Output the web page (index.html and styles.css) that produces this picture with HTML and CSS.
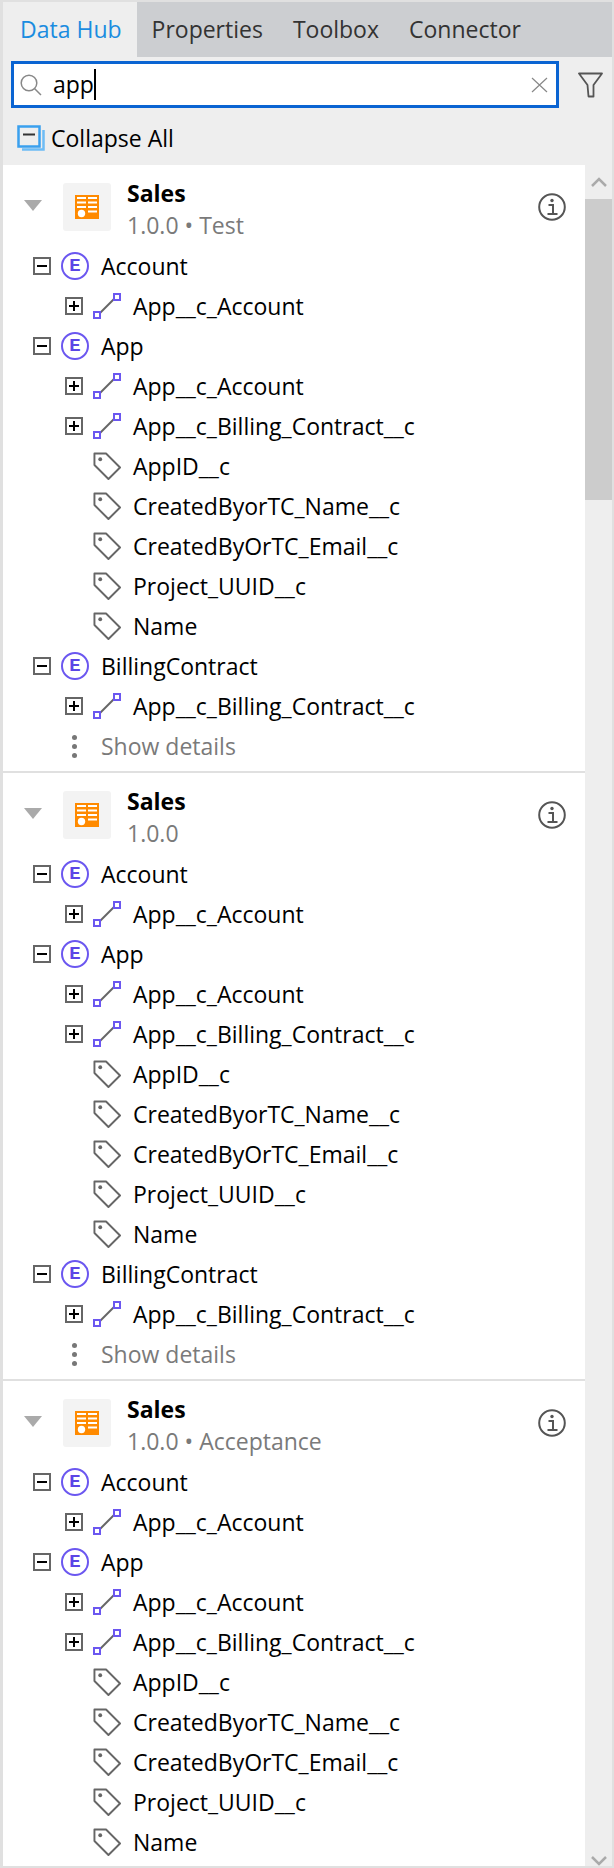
FILE: index.html
```html
<!DOCTYPE html>
<html lang="en-US">
<head>
	<meta charset="UTF-8">
	<title>Data Hub</title>
	<link rel="stylesheet" href="styles.css">
</head>
<body>
	<svg class="defs" width="0" height="0">
		<symbol id="i-assoc" viewBox="0 0 28 28">
			<path d="M6 22 22 6" fill="none" stroke="#666" stroke-width="2"/>
			<rect x="1" y="20" width="6" height="6" fill="#fff" stroke="#6b57f0" stroke-width="2"/>
			<rect x="21" y="2" width="6" height="6" fill="#fff" stroke="#6b57f0" stroke-width="2"/>
		</symbol>
		<symbol id="i-tag" viewBox="0 0 29 29">
			<path d="M1.500 1.500h12l14.500 14.500-12 12L1.500 13.500z" fill="none" stroke="#666" stroke-width="2" stroke-linejoin="round"/>
			<circle cx="7.500" cy="7.500" r="2" fill="#666"/>
		</symbol>
		<symbol id="i-module" viewBox="0 0 24 24">
			<path d="M0 0h24v24H0z" fill="#ff8a00"/>
			<path d="M2 3h9M13 3h9M2 7.500h9M13 7.500h9M2 12h9M13 12h9M13 16.500h9" fill="none" stroke="#fff" stroke-width="2"/>
			<circle cx="6.500" cy="18.500" r="3.700" fill="#fff"/>
		</symbol>
		<symbol id="i-info" viewBox="0 0 28 28">
			<circle cx="14" cy="14" r="12.800" fill="none" stroke="#555" stroke-width="2"/>
			<circle cx="14" cy="7.500" r="1.700" fill="#555"/>
			<path d="M10.500 12H15v9M9.500 21h10" fill="none" stroke="#555" stroke-width="2"/>
		</symbol>
	</svg>

	<div class="window">
		<div class="tabs">
			<div class="tab active">Data Hub</div>
			<div class="tab">Properties</div>
			<div class="tab">Toolbox</div>
			<div class="tab">Connector</div>
		</div>

		<div class="toolbar">
			<div class="search-row">
				<div class="search">
					<svg class="search-icon" width="22" height="22" viewBox="0 0 22 22">
						<circle cx="9" cy="9" r="7.800" fill="none" stroke="#888" stroke-width="1.500"/>
						<path d="M14.500 14.500l6.500 6.500" stroke="#888" stroke-width="1.500"/>
					</svg>
					<span class="query">app</span>
					<span class="caret"></span>
					<svg class="clear-icon" width="17" height="16" viewBox="0 0 17 16">
						<path d="M1 1l15 14M16 1 1 15" stroke="#888" stroke-width="1.200"/>
					</svg>
				</div>
				<svg class="filter-icon" width="25" height="26" viewBox="0 0 25 26">
					<path d="M1 1.500h23L15.500 13v11.500h-5L9.500 13z" fill="none" stroke="#555" stroke-width="1.800" stroke-linejoin="round"/>
				</svg>
			</div>
			<div class="collapse-row">
				<svg width="28" height="26" viewBox="0 0 28 26">
					<path d="M5 24.500h21.500V5" fill="none" stroke="#6ebcf5" stroke-width="2.500"/>
					<rect x="1.500" y="1.500" width="21" height="20" fill="none" stroke="#3aa0ee" stroke-width="2.500"/>
					<path d="M6 9.500h12" stroke="#333" stroke-width="2"/>
				</svg>
				<span>Collapse All</span>
			</div>
		</div>

		<div class="content">
			<div class="tree">
				<section class="module">
					<header class="module-head">
						<span class="triangle"></span>
						<span class="module-icon"><svg width="24" height="24"><use href="#i-module"/></svg></span>
						<div class="module-title">
							<strong>Sales</strong>
							<span>1.0.0 • Test</span>
						</div>
						<svg class="info" width="28" height="28"><use href="#i-info"/></svg>
					</header>
					<div class="row"><span class="box minus"></span><span class="entity">E</span><span>Account</span></div>
					<div class="row child"><span class="box plus"></span><svg width="28" height="28"><use href="#i-assoc"/></svg><span>App__c_Account</span></div>
					<div class="row"><span class="box minus"></span><span class="entity">E</span><span>App</span></div>
					<div class="row child"><span class="box plus"></span><svg width="28" height="28"><use href="#i-assoc"/></svg><span>App__c_Account</span></div>
					<div class="row child"><span class="box plus"></span><svg width="28" height="28"><use href="#i-assoc"/></svg><span>App__c_Billing_Contract__c</span></div>
					<div class="row child"><span class="box none"></span><svg width="28" height="28"><use href="#i-tag"/></svg><span>AppID__c</span></div>
					<div class="row child"><span class="box none"></span><svg width="28" height="28"><use href="#i-tag"/></svg><span>CreatedByorTC_Name__c</span></div>
					<div class="row child"><span class="box none"></span><svg width="28" height="28"><use href="#i-tag"/></svg><span>CreatedByOrTC_Email__c</span></div>
					<div class="row child"><span class="box none"></span><svg width="28" height="28"><use href="#i-tag"/></svg><span>Project_UUID__c</span></div>
					<div class="row child"><span class="box none"></span><svg width="28" height="28"><use href="#i-tag"/></svg><span>Name</span></div>
					<div class="row"><span class="box minus"></span><span class="entity">E</span><span>BillingContract</span></div>
					<div class="row child"><span class="box plus"></span><svg width="28" height="28"><use href="#i-assoc"/></svg><span>App__c_Billing_Contract__c</span></div>
					<div class="row details"><span class="dots"></span><span>Show details</span></div>
				</section>

				<section class="module">
					<header class="module-head">
						<span class="triangle"></span>
						<span class="module-icon"><svg width="24" height="24"><use href="#i-module"/></svg></span>
						<div class="module-title">
							<strong>Sales</strong>
							<span>1.0.0</span>
						</div>
						<svg class="info" width="28" height="28"><use href="#i-info"/></svg>
					</header>
					<div class="row"><span class="box minus"></span><span class="entity">E</span><span>Account</span></div>
					<div class="row child"><span class="box plus"></span><svg width="28" height="28"><use href="#i-assoc"/></svg><span>App__c_Account</span></div>
					<div class="row"><span class="box minus"></span><span class="entity">E</span><span>App</span></div>
					<div class="row child"><span class="box plus"></span><svg width="28" height="28"><use href="#i-assoc"/></svg><span>App__c_Account</span></div>
					<div class="row child"><span class="box plus"></span><svg width="28" height="28"><use href="#i-assoc"/></svg><span>App__c_Billing_Contract__c</span></div>
					<div class="row child"><span class="box none"></span><svg width="28" height="28"><use href="#i-tag"/></svg><span>AppID__c</span></div>
					<div class="row child"><span class="box none"></span><svg width="28" height="28"><use href="#i-tag"/></svg><span>CreatedByorTC_Name__c</span></div>
					<div class="row child"><span class="box none"></span><svg width="28" height="28"><use href="#i-tag"/></svg><span>CreatedByOrTC_Email__c</span></div>
					<div class="row child"><span class="box none"></span><svg width="28" height="28"><use href="#i-tag"/></svg><span>Project_UUID__c</span></div>
					<div class="row child"><span class="box none"></span><svg width="28" height="28"><use href="#i-tag"/></svg><span>Name</span></div>
					<div class="row"><span class="box minus"></span><span class="entity">E</span><span>BillingContract</span></div>
					<div class="row child"><span class="box plus"></span><svg width="28" height="28"><use href="#i-assoc"/></svg><span>App__c_Billing_Contract__c</span></div>
					<div class="row details"><span class="dots"></span><span>Show details</span></div>
				</section>

				<section class="module">
					<header class="module-head">
						<span class="triangle"></span>
						<span class="module-icon"><svg width="24" height="24"><use href="#i-module"/></svg></span>
						<div class="module-title">
							<strong>Sales</strong>
							<span>1.0.0 • Acceptance</span>
						</div>
						<svg class="info" width="28" height="28"><use href="#i-info"/></svg>
					</header>
					<div class="row"><span class="box minus"></span><span class="entity">E</span><span>Account</span></div>
					<div class="row child"><span class="box plus"></span><svg width="28" height="28"><use href="#i-assoc"/></svg><span>App__c_Account</span></div>
					<div class="row"><span class="box minus"></span><span class="entity">E</span><span>App</span></div>
					<div class="row child"><span class="box plus"></span><svg width="28" height="28"><use href="#i-assoc"/></svg><span>App__c_Account</span></div>
					<div class="row child"><span class="box plus"></span><svg width="28" height="28"><use href="#i-assoc"/></svg><span>App__c_Billing_Contract__c</span></div>
					<div class="row child"><span class="box none"></span><svg width="28" height="28"><use href="#i-tag"/></svg><span>AppID__c</span></div>
					<div class="row child"><span class="box none"></span><svg width="28" height="28"><use href="#i-tag"/></svg><span>CreatedByorTC_Name__c</span></div>
					<div class="row child"><span class="box none"></span><svg width="28" height="28"><use href="#i-tag"/></svg><span>CreatedByOrTC_Email__c</span></div>
					<div class="row child"><span class="box none"></span><svg width="28" height="28"><use href="#i-tag"/></svg><span>Project_UUID__c</span></div>
					<div class="row child"><span class="box none"></span><svg width="28" height="28"><use href="#i-tag"/></svg><span>Name</span></div>
				</section>
			</div>

			<div class="scrollbar">
				<svg class="arrow" width="16" height="10" viewBox="0 0 16 10"><path d="M1 9l7-7 7 7" fill="none" stroke="#aaa" stroke-width="2.500"/></svg>
				<div class="thumb"></div>
				<div class="track"></div>
				<svg class="arrow arrow-down" width="16" height="10" viewBox="0 0 16 10"><path d="M1 1l7 7 7-7" fill="none" stroke="#aaa" stroke-width="2.500"/></svg>
			</div>
		</div>
	</div>
</body>
</html>
```

FILE: styles.css
```css
html, body {
	margin: 0;
	padding: 0;
	height: 100%;
}

body {
	font: 23px/1.25 "Open Sans", "Noto Sans", sans-serif;
	color: #000;
	background: #e0e0e0;
}

.defs {
	position: absolute;
}

.window {
	display: flex;
	flex-direction: column;
	box-sizing: border-box;
	height: 1868px;
	padding: 2px 2px 2px 3px;
	overflow: hidden;
}

/* tabs */
.tabs {
	display: flex;
	flex: none;
	height: 55px;
	background: #ccced1;
	color: #333;
}

.tab {
	display: flex;
	align-items: center;
	padding: 0 15px;
}

.tab.active {
	background: #eee;
	color: #1a8ce0;
	padding-left: 17px;
}

/* search and collapse */
.toolbar {
	flex: none;
	height: 108px;
	box-sizing: border-box;
	background: #eee;
	padding-top: 4px;
}

.search-row {
	display: flex;
	align-items: center;
	padding-left: 8px;
}

.search {
	display: flex;
	align-items: center;
	box-sizing: border-box;
	width: 548px;
	height: 47px;
	background: #fff;
	border: 3px solid #0a64d2;
	padding: 0 8px 0 6px;
}

.search-icon {
	flex: none;
}

.query {
	margin-left: 11px;
}

.caret {
	width: 2px;
	height: 31px;
	background: #000;
}

.clear-icon {
	margin-left: auto;
}

.filter-icon {
	margin-left: 19px;
}

.collapse-row {
	display: flex;
	align-items: center;
	gap: 6px;
	height: 26px;
	margin-top: 17px;
	padding-left: 14px;
}

/* tree */
.content {
	display: flex;
	flex: 1;
	min-height: 0;
}

.tree {
	flex: 1;
	background: #fff;
	overflow: hidden;
}

.module {
	box-sizing: border-box;
	height: 608px;
	border-bottom: 2px solid #e0e0e0;
}

.module:last-child {
	border-bottom: 0;
}

.module-head {
	display: flex;
	align-items: flex-start;
	height: 81px;
}

.triangle {
	flex: none;
	width: 0;
	height: 0;
	margin: 35px 0 0 21px;
	border-top: 11px solid #aaa;
	border-left: 9px solid transparent;
	border-right: 9px solid transparent;
}

.module-icon {
	display: flex;
	flex: none;
	align-items: center;
	justify-content: center;
	width: 48px;
	height: 48px;
	margin: 18px 0 0 21px;
	background: #f3f3f3;
	border-radius: 3px;
}

.module-title {
	display: flex;
	flex-direction: column;
	margin: 12px 0 0 16px;
	line-height: 32px;
}

.module-title strong {
	font-weight: 700;
}

.module-title span {
	color: #7a7a7a;
}

.info {
	margin: 28px 19px 0 auto;
}

.row {
	display: flex;
	align-items: center;
	height: 40px;
	padding-left: 30px;
	white-space: nowrap;
}

.row.child {
	padding-left: 62px;
}

.box {
	display: flex;
	flex: none;
	box-sizing: border-box;
	position: relative;
	width: 18px;
	height: 18px;
	margin-right: 10px;
	border: 2px solid #666;
}

.box.none {
	border: 0;
}

.box.minus::before,
.box.plus::before {
	content: "";
	position: absolute;
	left: 2px;
	top: 6px;
	width: 10px;
	height: 2px;
	background: #000;
}

.box.plus::after {
	content: "";
	position: absolute;
	left: 6px;
	top: 2px;
	width: 2px;
	height: 10px;
	background: #000;
}

.entity {
	display: flex;
	flex: none;
	align-items: center;
	justify-content: center;
	box-sizing: border-box;
	width: 28px;
	height: 28px;
	margin-right: 12px;
	border: 2px solid #6b57f0;
	border-radius: 50%;
	color: #5b45e6;
	font: 700 19px/1 "Liberation Mono", monospace;
}

.row.child svg {
	flex: none;
	margin-right: 12px;
}

.row.details {
	color: #7a7a7a;
}

.dots {
	flex: none;
	width: 5px;
	height: 5px;
	margin: 0 24px 0 39px;
	border-radius: 50%;
	background: #777;
	box-shadow: 0 -9px 0 #777, 0 9px 0 #777;
}

/* scrollbar */
.scrollbar {
	display: flex;
	flex: none;
	flex-direction: column;
	align-items: center;
	width: 27px;
	background: #eee;
}

.arrow {
	flex: none;
	height: 10px;
	margin: 12px 0;
}

.arrow-down {
	margin: auto 0 0;
}

.thumb {
	flex: none;
	align-self: stretch;
	height: 301px;
	background: #ccc;
}

.track {
	flex: 1;
}
```
